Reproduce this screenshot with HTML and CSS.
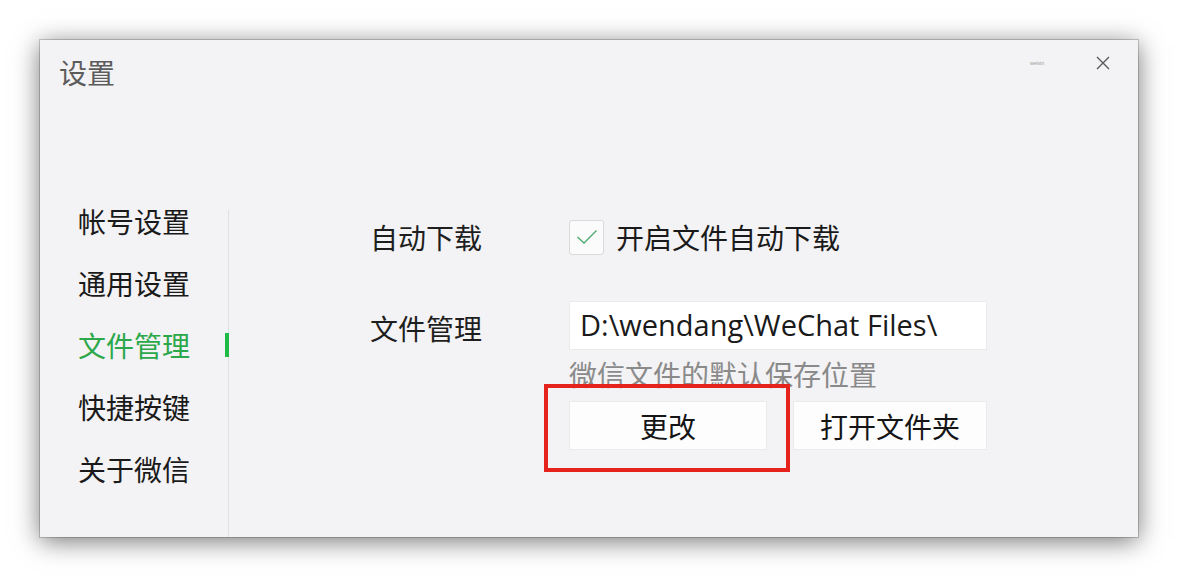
FILE: index.html
```html
<!DOCTYPE html>
<html lang="zh-CN">

<head>
    <meta charset="UTF-8">
    <meta name="viewport" content="width=device-width, initial-scale=1.0">
    <title>设置</title>
    <link rel="stylesheet" href="styles.css">
</head>

<body>
    <div class="window">
        <div class="titlebar">
            <span class="title">设置</span>
            <div class="controls">
                <span class="mark">weixin</span>
                <svg class="close-icon" width="14" height="14" viewBox="0 0 14 14">
                    <path d="M1 1 L13 13 M13 1 L1 13" stroke="#5a5a5a" stroke-width="1.4" fill="none" />
                </svg>
            </div>
        </div>

        <div class="main">
            <ul class="nav">
                <li class="nav-item">帐号设置</li>
                <li class="nav-item">通用设置</li>
                <li class="nav-item active">文件管理</li>
                <li class="nav-item">快捷按键</li>
                <li class="nav-item">关于微信</li>
            </ul>

            <div class="panel">
                <div class="row row-download">
                    <span class="label">自动下载</span>
                    <label class="check">
                        <span class="check-box">
                            <svg width="22" height="16" viewBox="0 0 22 16">
                                <path d="M1.5 8 L8 14 L20.5 1.5" stroke="#4aa86a" stroke-width="1.3" fill="none" />
                            </svg>
                        </span>
                        开启文件自动下载
                    </label>
                </div>

                <div class="row row-files">
                    <span class="label label-files">文件管理</span>
                    <div class="files">
                        <div class="path">D:\wendang\WeChat Files\</div>
                        <div class="hint">微信文件的默认保存位置</div>
                        <div class="buttons">
                            <div class="btn-wrap">
                                <button type="button" class="btn btn-change">更改</button>
                                <span class="highlight"></span>
                            </div>
                            <button type="button" class="btn btn-open">打开文件夹</button>
                        </div>
                    </div>
                </div>
            </div>
        </div>
    </div>
</body>

</html>
```

FILE: styles.css
```css
body {
    margin: 0;
    min-height: 578px;
    background-color: #ffffff;
    font-family: "Noto Sans CJK SC", "Noto Sans", sans-serif;
    color: #1a1a1a;
}

.window {
    margin: 40px 0 0 40px;
    width: 1098px;
    height: 497px;
    background-color: #f3f2f4;
    box-shadow: 0 0 0 1px rgba(0, 0, 0, 0.18), 0 4px 24px rgba(0, 0, 0, 0.55);
    display: flex;
    flex-direction: column;
}

.titlebar {
    height: 150px;
    box-sizing: border-box;
    padding: 16px 28px 0 19px;
    display: flex;
    justify-content: space-between;
    align-items: flex-start;
}

.title {
    font-size: 28px;
    line-height: 32px;
    color: #5c5c5c;
}

.controls {
    display: flex;
    align-items: center;
    gap: 52px;
    height: 14px;
}

.mark {
    font-family: "Liberation Sans", sans-serif;
    font-size: 5px;
    color: #9a9a9a;
}

.close-icon {
    display: block;
}

.main {
    flex: 1;
    display: flex;
}

.nav {
    list-style: none;
    margin: 0;
    padding: 0;
    width: 189px;
    position: relative;
}

.nav::before {
    content: "";
    position: absolute;
    right: 0;
    top: 20px;
    bottom: 0;
    width: 1px;
    background-color: #e0dfe1;
}

.nav-item {
    position: relative;
    height: 62px;
    line-height: 62px;
    padding-left: 38px;
    font-size: 28px;
    color: #1a1a1a;
}

.nav-item.active {
    color: #2ba84a;
}

.nav-item.active::after {
    content: "";
    position: absolute;
    right: 0;
    top: 19px;
    width: 4px;
    height: 24px;
    background-color: #1fbb45;
}

.panel {
    padding: 27px 0 0 141px;
}

.row {
    display: grid;
    grid-template-columns: 199px 418px;
}

.row-download {
    height: 35px;
    align-items: center;
    margin-bottom: 49px;
}

.label {
    font-size: 28px;
    color: #1e1e1e;
}

.label-files {
    line-height: 54px;
}

.check {
    display: flex;
    align-items: center;
    gap: 12px;
    font-size: 28px;
    color: #1a1a1a;
}

.check-box {
    width: 35px;
    height: 35px;
    box-sizing: border-box;
    border: 1px solid #d9d9d9;
    border-radius: 3px;
    background-color: #fbfbfb;
    display: flex;
    align-items: center;
    justify-content: center;
}

.path {
    height: 49px;
    box-sizing: border-box;
    border: 1px solid #ebebeb;
    background-color: #ffffff;
    padding-left: 10px;
    font-family: "Open Sans", "Noto Sans", sans-serif;
    font-size: 29px;
    line-height: 46px;
    color: #1a1a1a;
}

.hint {
    margin-top: 9px;
    font-size: 28px;
    line-height: 30px;
    color: #8a8a8a;
}

.buttons {
    margin-top: 12px;
    display: flex;
    gap: 26px;
}

.btn-wrap {
    position: relative;
}

.btn {
    height: 49px;
    border: 1px solid #ebebeb;
    background-color: #fdfdfd;
    font-family: "Noto Sans CJK SC", sans-serif;
    font-size: 28px;
    color: #151515;
    padding: 0;
}

.btn-change {
    width: 198px;
}

.btn-open {
    width: 194px;
}

.highlight {
    position: absolute;
    left: -25px;
    top: -17px;
    width: 246px;
    height: 88px;
    box-sizing: border-box;
    border: 4px solid #e5231c;
    pointer-events: none;
}
```
